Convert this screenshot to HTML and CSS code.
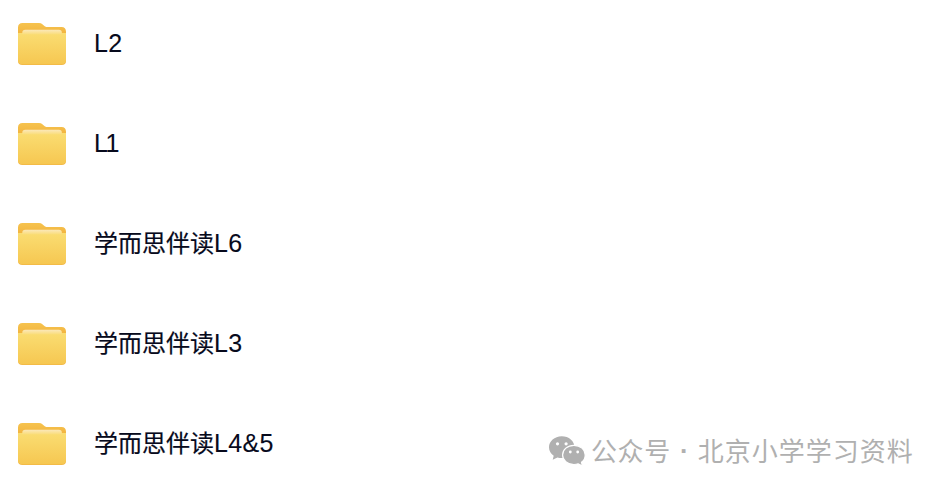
FILE: index.html
```html
<!DOCTYPE html>
<html lang="zh-CN">
<head>
<meta charset="utf-8">
<title>学而思伴读</title>
<link rel="stylesheet" href="styles.css">
</head>
<body>
<svg class="defs" aria-hidden="true">
  <defs>
    <linearGradient id="back" x1="0" y1="0" x2="0" y2="1"><stop offset="0" stop-color="#f6c34e"/><stop offset=".6" stop-color="#f1b03c"/></linearGradient>
    <linearGradient id="front" x1="0" y1="0" x2="0" y2="1"><stop offset="0" stop-color="#fadd72"/><stop offset="1" stop-color="#f6c751"/></linearGradient>
    <linearGradient id="shine" x1="0" y1="0" x2="0" y2="1"><stop offset="0" stop-color="#fbe8bb"/><stop offset="1" stop-color="#fadd78"/></linearGradient>
    <symbol id="folder" viewBox="0 0 48 44">
      <path fill="url(#back)" d="M0 5.500Q0 1 4.500 1H21q2 0 3.400 1.200l2.300 2Q28 5.100 30 5.100h13.500Q48 5.100 48 9.800v14H0z"/>
      <path fill="#f2b744" d="M0 14h48v24.500q0 4.600-4.500 4.600h-39Q0 43.100 0 38.500z"/>
      <path fill="url(#front)" d="M0 11h48v26.500q0 4.800-4.500 4.800h-39Q0 42.300 0 37.500z"/>
      <path fill="url(#shine)" d="M4.300 12.500v-2q0-2.800 3-2.800h33.500q3 0 3 2.800v2z"/>
    </symbol>
  </defs>
</svg>
<ul class="files">
  <li class="file"><svg class="icon"><use href="#folder"/></svg><span class="name"><span class="latin">L2</span></span></li>
  <li class="file"><svg class="icon"><use href="#folder"/></svg><span class="name"><span class="latin narrow">L1</span></span></li>
  <li class="file"><svg class="icon"><use href="#folder"/></svg><span class="name">学而思伴读<span class="latin">L6</span></span></li>
  <li class="file"><svg class="icon"><use href="#folder"/></svg><span class="name">学而思伴读<span class="latin">L3</span></span></li>
  <li class="file"><svg class="icon"><use href="#folder"/></svg><span class="name">学而思伴读<span class="latin">L4&amp;5</span></span></li>
</ul>
<div class="watermark">
  <svg class="wechat" viewBox="0 0 38 32">
    <path fill="#b0b0b0" d="M13.700 1.200C6.500 1.200 1 6.200 1 12.300c0 3.500 1.700 6.500 4.700 8.500l-1 4 4.700-2.400c1.500.5 2.800.7 4.500.7 7.200 0 12.600-4.800 12.600-10.900S20.900 1.200 13.700 1.200z"/>
    <path fill="#b0b0b0" stroke="#fff" stroke-width="1.200" d="M25.900 10.300c-6.500 0-11.300 4.300-11.300 9.600s4.800 9.600 11.300 9.600c1.600 0 3-.2 4.300-.7l4.300 2.300-1-3.800c2.300-1.700 3.700-4.300 3.700-7.400 0-5.300-4.800-9.600-11.300-9.600z"/>
    <g fill="#fff"><circle cx="9.500" cy="8.800" r="1.600"/><circle cx="18.100" cy="8.800" r="1.600"/><circle cx="22.300" cy="17" r="1.400"/><circle cx="29.700" cy="17" r="1.400"/></g>
  </svg>
  <span class="account">公众号</span><span class="dot">·</span><span class="title">北京小学学习资料</span>
</div>
</body>
</html>
```
FILE: styles.css
```css
body {
  margin: 0;
  height: 490px;
  overflow: hidden;
  background: #fff;
  color: #070a1c;
  font-family: "Liberation Sans", "Noto Sans CJK SC", sans-serif;
}
.defs { position: absolute; width: 0; height: 0; }
.files { margin: 0; padding: 0; list-style: none; }
.file {
  display: flex;
  align-items: center;
  gap: 28px;
  height: 88px;
  padding-left: 18px;
  margin-bottom: 12px;
}
.icon { width: 48px; height: 44px; }
.name {
  padding-bottom: 2px;
  font-size: 24px;
  line-height: 36px;
  white-space: nowrap;
  -webkit-text-stroke: 0.2px currentColor;
}
.latin {
  font-size: 25px;
  letter-spacing: 0.300px;
  -webkit-text-stroke: 0.1px currentColor;
}
.narrow { letter-spacing: -2.500px; }
.watermark {
  position: absolute;
  left: 548px;
  top: 430px;
  display: flex;
  align-items: center;
  height: 42px;
  color: #b0b0b0;
  font: 26px/40px "Noto Sans CJK SC", sans-serif;
  white-space: nowrap;
}
.wechat { width: 38px; height: 32px; margin-right: 5px; }
.account { letter-spacing: 0.600px; }
.dot {
  width: 27px;
  font-family: "Liberation Sans", sans-serif;
  font-weight: bold;
  text-align: center;
}
.account, .title { padding-bottom: 2px; }
.title { letter-spacing: 1px; }
```
